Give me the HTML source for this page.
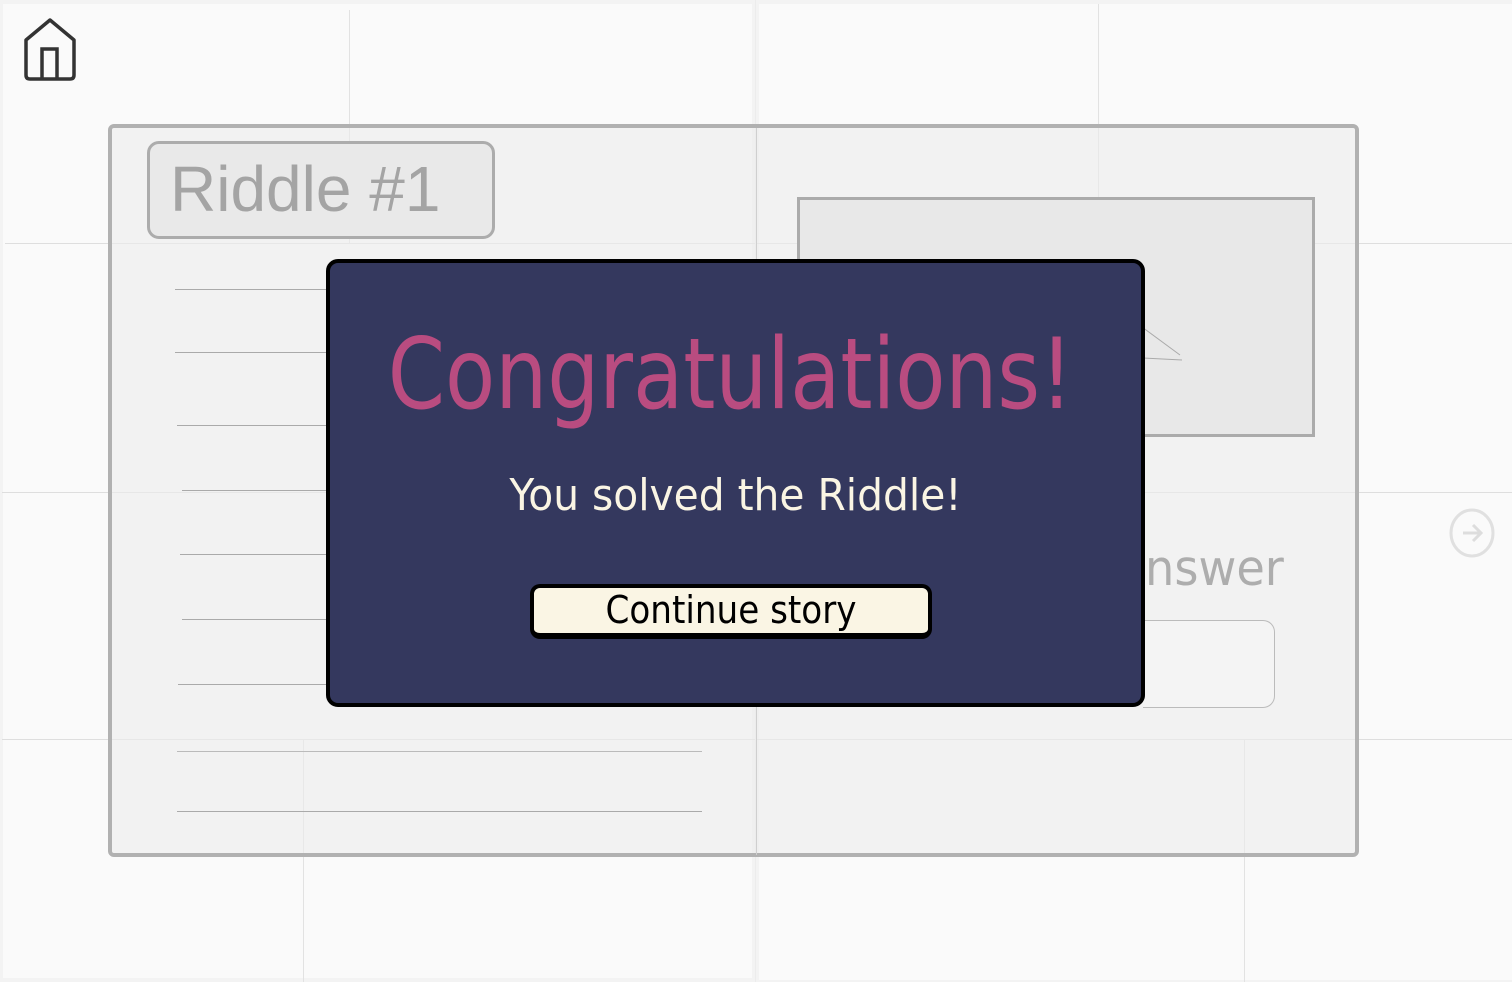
<!DOCTYPE html>
<html><head><meta charset="utf-8"><style>
*{margin:0;padding:0;box-sizing:border-box}
body{width:1512px;height:982px;background:#f3f3f3;position:relative;overflow:hidden;font-family:"Liberation Sans",sans-serif}
.a{position:absolute}
.hl{position:absolute;height:1px;background:#dedede}
.vl{position:absolute;width:1px;background:#e2e2e2}
.cond{font-family:"DejaVu Sans Condensed","Liberation Sans Narrow","Liberation Sans",sans-serif;font-stretch:condensed;white-space:nowrap}
</style></head><body>
<div class="a" style="left:3px;top:4px;width:749px;height:974px;background:#fafafa"></div>
<div class="a" style="left:759px;top:4px;width:753px;height:976px;background:#fafafa"></div>
<div class="vl" style="left:349px;top:10px;height:233px"></div>
<div class="vl" style="left:1098px;top:4px;height:240px"></div>
<div class="hl" style="left:5px;top:243px;width:1507px"></div>
<div class="hl" style="left:2px;top:492px;width:1510px"></div>
<div class="hl" style="left:2px;top:739px;width:1510px"></div>
<div class="vl" style="left:303px;top:740px;height:242px"></div>
<div class="vl" style="left:1244px;top:740px;height:242px"></div>
<div class="vl" style="left:755px;top:0;height:982px;background:#ececec"></div>
<svg class="a" style="left:22px;top:18px" width="60" height="64" viewBox="0 0 60 64"><path d="M4 22 V57 Q4 61 8 61 H48 Q52 61 52 57 V22 L28 2 L4 22 Z" fill="none" stroke="#333" stroke-width="3.5" stroke-linejoin="round"/><path d="M20 61 V31 H35 V61" fill="none" stroke="#333" stroke-width="3.5"/></svg>
<div class="a" style="left:108px;top:124px;width:1251px;height:733px;border:4px solid #b1b1b1;border-radius:6px;background:rgba(236,236,236,.6)"></div>
<div class="vl" style="left:756px;top:128px;height:727px;background:#cfcfcf"></div>
<div class="a" style="left:147px;top:141px;width:348px;height:98px;border:3px solid #acacac;border-radius:12px;background:#e9e9e9"></div>
<div class="a" style="left:170px;top:152px;font-size:64px;color:#a4a4a4">Riddle #1</div>
<div class="hl" style="left:175px;top:289px;width:160px;background:#aaa"></div>
<div class="hl" style="left:175px;top:352px;width:160px;background:#aaa"></div>
<div class="hl" style="left:177px;top:425px;width:160px;background:#aaa"></div>
<div class="hl" style="left:182px;top:490px;width:160px;background:#aaa"></div>
<div class="hl" style="left:180px;top:554px;width:160px;background:#aaa"></div>
<div class="hl" style="left:182px;top:619px;width:160px;background:#aaa"></div>
<div class="hl" style="left:178px;top:684px;width:160px;background:#aaa"></div>
<div class="hl" style="left:177px;top:751px;width:525px;background:#bbb"></div>
<div class="hl" style="left:177px;top:811px;width:525px;background:#aaa"></div>
<div class="a" style="left:797px;top:197px;width:518px;height:240px;border:3px solid #ababab;background:#e8e8e8"></div>
<svg class="a" style="left:1140px;top:325px" width="45" height="40"><path d="M2 2 L40 30 M2 33 L42 35" stroke="#aaa" fill="none"/></svg>
<div class="a" style="left:1143px;top:620px;width:132px;height:88px;border:1px solid #bbb;border-left:none;border-radius:0 12px 12px 0;background:#f4f4f4"></div>
<div class="a cond" style="left:1145px;top:540px;font-size:49px;color:#adadad"><span style="display:inline-block;transform:scaleX(1.05);transform-origin:left">nswer</span></div>
<svg class="a" style="left:1448px;top:508px" width="48" height="52"><ellipse cx="24" cy="25" rx="21" ry="23" fill="none" stroke="#e0e0e0" stroke-width="3"/><path d="M15 25 H32 M25 17 L33 25 L25 33" fill="none" stroke="#ddd" stroke-width="3"/></svg>
<div class="a" style="left:326px;top:259px;width:819px;height:448px;background:#34385e;border:4px solid #000;border-radius:12px"></div>
<div class="a cond" style="left:0;top:318px;width:1460px;text-align:center;font-size:98px;color:#b94c80"><span style="display:inline-block;transform:scaleX(.93)">Congratulations!</span></div>
<div class="a cond" style="left:0;top:470px;width:1472px;text-align:center;font-size:44px;color:#faf5e4"><span style="display:inline-block;transform:scaleX(1.03)">You solved the Riddle!</span></div>
<div class="a" style="left:530px;top:584px;width:402px;height:55px;background:#faf5e4;border:4px solid #000;border-bottom-width:6px;border-radius:10px"></div>
<div class="a cond" style="left:530px;top:588px;width:402px;text-align:center;font-size:38px;color:#000"><span style="display:inline-block;transform:scaleX(1.0)">Continue story</span></div>
</body></html>
